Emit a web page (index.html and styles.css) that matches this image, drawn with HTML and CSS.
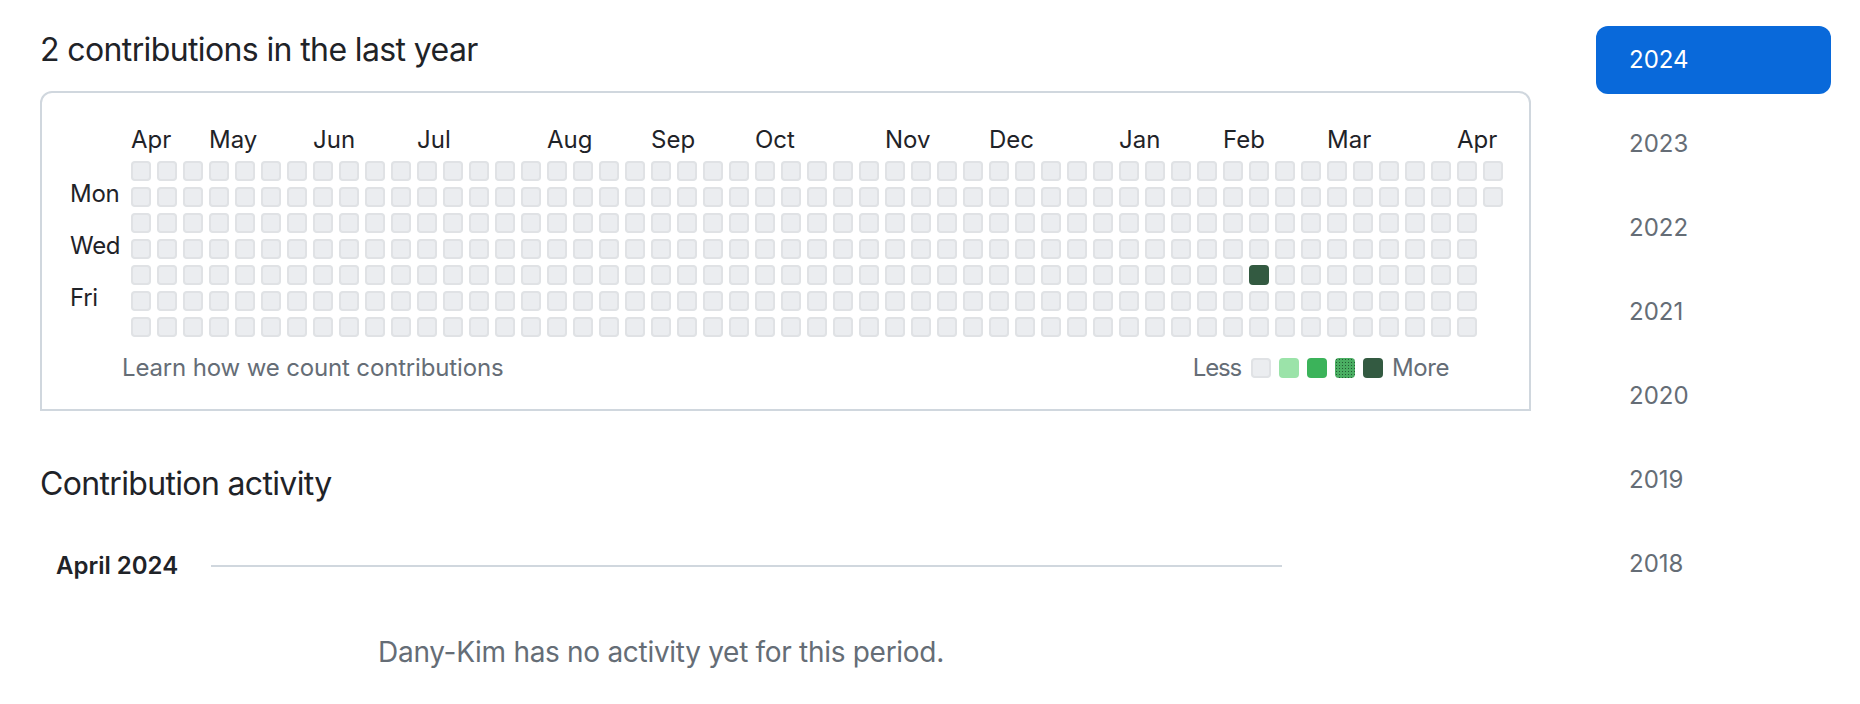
FILE: index.html
```html
<!DOCTYPE html>
<html lang="en">
<head>
<meta charset="utf-8">
<title>Contributions</title>
<link rel="stylesheet" href="styles.css">
</head>
<body>
<div class="page">
  <main class="main">
    <h2 class="graph-title">2 contributions in the last year</h2>
    <div class="graph-box">
      <div class="calendar">
        <div class="months">
          <span style="grid-column: 1">Apr</span>
          <span style="grid-column: 4">May</span>
          <span style="grid-column: 8">Jun</span>
          <span style="grid-column: 12">Jul</span>
          <span style="grid-column: 17">Aug</span>
          <span style="grid-column: 21">Sep</span>
          <span style="grid-column: 25">Oct</span>
          <span style="grid-column: 30">Nov</span>
          <span style="grid-column: 34">Dec</span>
          <span style="grid-column: 39">Jan</span>
          <span style="grid-column: 43">Feb</span>
          <span style="grid-column: 47">Mar</span>
          <span style="grid-column: 52">Apr</span>
        </div>
        <div class="days">
          <span class="mon">Mon</span>
          <span class="wed">Wed</span>
          <span class="fri">Fri</span>
        </div>
        <div class="cells">
<i></i><i></i><i></i><i></i><i></i><i></i><i></i>
<i></i><i></i><i></i><i></i><i></i><i></i><i></i>
<i></i><i></i><i></i><i></i><i></i><i></i><i></i>
<i></i><i></i><i></i><i></i><i></i><i></i><i></i>
<i></i><i></i><i></i><i></i><i></i><i></i><i></i>
<i></i><i></i><i></i><i></i><i></i><i></i><i></i>
<i></i><i></i><i></i><i></i><i></i><i></i><i></i>
<i></i><i></i><i></i><i></i><i></i><i></i><i></i>
<i></i><i></i><i></i><i></i><i></i><i></i><i></i>
<i></i><i></i><i></i><i></i><i></i><i></i><i></i>
<i></i><i></i><i></i><i></i><i></i><i></i><i></i>
<i></i><i></i><i></i><i></i><i></i><i></i><i></i>
<i></i><i></i><i></i><i></i><i></i><i></i><i></i>
<i></i><i></i><i></i><i></i><i></i><i></i><i></i>
<i></i><i></i><i></i><i></i><i></i><i></i><i></i>
<i></i><i></i><i></i><i></i><i></i><i></i><i></i>
<i></i><i></i><i></i><i></i><i></i><i></i><i></i>
<i></i><i></i><i></i><i></i><i></i><i></i><i></i>
<i></i><i></i><i></i><i></i><i></i><i></i><i></i>
<i></i><i></i><i></i><i></i><i></i><i></i><i></i>
<i></i><i></i><i></i><i></i><i></i><i></i><i></i>
<i></i><i></i><i></i><i></i><i></i><i></i><i></i>
<i></i><i></i><i></i><i></i><i></i><i></i><i></i>
<i></i><i></i><i></i><i></i><i></i><i></i><i></i>
<i></i><i></i><i></i><i></i><i></i><i></i><i></i>
<i></i><i></i><i></i><i></i><i></i><i></i><i></i>
<i></i><i></i><i></i><i></i><i></i><i></i><i></i>
<i></i><i></i><i></i><i></i><i></i><i></i><i></i>
<i></i><i></i><i></i><i></i><i></i><i></i><i></i>
<i></i><i></i><i></i><i></i><i></i><i></i><i></i>
<i></i><i></i><i></i><i></i><i></i><i></i><i></i>
<i></i><i></i><i></i><i></i><i></i><i></i><i></i>
<i></i><i></i><i></i><i></i><i></i><i></i><i></i>
<i></i><i></i><i></i><i></i><i></i><i></i><i></i>
<i></i><i></i><i></i><i></i><i></i><i></i><i></i>
<i></i><i></i><i></i><i></i><i></i><i></i><i></i>
<i></i><i></i><i></i><i></i><i></i><i></i><i></i>
<i></i><i></i><i></i><i></i><i></i><i></i><i></i>
<i></i><i></i><i></i><i></i><i></i><i></i><i></i>
<i></i><i></i><i></i><i></i><i></i><i></i><i></i>
<i></i><i></i><i></i><i></i><i></i><i></i><i></i>
<i></i><i></i><i></i><i></i><i></i><i></i><i></i>
<i></i><i></i><i></i><i></i><i></i><i></i><i></i>
<i></i><i></i><i></i><i></i><i class="l4"></i><i></i><i></i>
<i></i><i></i><i></i><i></i><i></i><i></i><i></i>
<i></i><i></i><i></i><i></i><i></i><i></i><i></i>
<i></i><i></i><i></i><i></i><i></i><i></i><i></i>
<i></i><i></i><i></i><i></i><i></i><i></i><i></i>
<i></i><i></i><i></i><i></i><i></i><i></i><i></i>
<i></i><i></i><i></i><i></i><i></i><i></i><i></i>
<i></i><i></i><i></i><i></i><i></i><i></i><i></i>
<i></i><i></i><i></i><i></i><i></i><i></i><i></i>
<i></i><i></i>
        </div>
      </div>
      <div class="graph-footer">
        <a class="learn" href="#">Learn how we count contributions</a>
        <div class="legend">
          <span class="less">Less</span>
          <i></i><i class="l1"></i><i class="l2"></i><i class="l3"></i><i class="l4"></i>
          <span class="more">More</span>
        </div>
      </div>
    </div>

    <h2 class="activity-title">Contribution activity</h2>
    <section class="activity">
      <div class="month-heading">
        <h3>April 2024</h3>
        <span class="rule"></span>
      </div>
      <p class="empty">Dany-Kim has no activity yet for this period.</p>
    </section>
  </main>

  <nav class="years">
    <a class="year selected" href="#">2024</a>
    <a class="year" href="#">2023</a>
    <a class="year" href="#">2022</a>
    <a class="year" href="#">2021</a>
    <a class="year" href="#">2020</a>
    <a class="year" href="#">2019</a>
    <a class="year" href="#">2018</a>
  </nav>
</div>
</body>
</html>
```

FILE: styles.css
```css
* { box-sizing: border-box; }
html, body { margin: 0; background: #ffffff; }
body {
  font-family: Inter, "Liberation Sans", sans-serif;
  color: #1f2328;
}
.page {
  display: flex;
  gap: 65px;
  padding: 0 29px 0 40px;
}
.main { flex: 1; min-width: 0; }

.graph-title {
  margin: 26px 0 0;
  font-size: 32px;
  font-weight: 400;
  line-height: 48px;
  letter-spacing: -0.62px;
}

.graph-box {
  margin-top: 17px;
  border: 2px solid #d0d7de;
  border-radius: 12px 12px 0 0;
  padding: 35px 16px 21px;
}

.calendar {
  display: grid;
  grid-template-columns: 55px max-content;
  grid-template-rows: 27px auto;
  gap: 6px;
  padding-left: 12px;
  font-size: 24px;
}
.months {
  grid-column: 2;
  grid-row: 1;
  display: grid;
  grid-template-columns: repeat(53, 20px);
  column-gap: 6px;
  line-height: 24px;
}
.months span { grid-row: 1; white-space: nowrap; align-self: start; }

.days {
  grid-column: 1;
  grid-row: 2;
  display: grid;
  grid-template-rows: repeat(7, 20px);
  row-gap: 6px;
  line-height: 14px;
  letter-spacing: -0.3px;
}
.days span { align-self: start; white-space: nowrap; }
.days .mon { grid-row: 2; }
.days .wed { grid-row: 4; }
.days .fri { grid-row: 6; }

.cells {
  grid-column: 2;
  grid-row: 2;
  display: grid;
  grid-template-rows: repeat(7, 20px);
  grid-auto-flow: column;
  grid-auto-columns: 20px;
  gap: 6px;
}
.cells i, .legend i {
  display: block;
  width: 20px;
  height: 20px;
  border-radius: 4px;
  background: #ebedf0;
  box-shadow: inset 0 0 0 2px rgba(27, 31, 35, 0.05);
}
.cells i.l4, .legend i.l4 { background: #335a41; box-shadow: none; }
.legend i.l1 { background: #9be3a9; box-shadow: none; }
.legend i.l2 { background: #3bb35a; box-shadow: none; }
.legend i.l3 {
  background-color: #4aae62;
  background-image: radial-gradient(circle, #245c34 35%, transparent 40%);
  background-size: 3px 3px;
  box-shadow: none;
}

.graph-footer {
  margin-top: 11px;
  height: 40px;
  display: flex;
  align-items: center;
  justify-content: space-between;
  padding: 0 64px;
  font-size: 24px;
  line-height: 40px;
  color: #656d76;
}
.learn { color: #656d76; text-decoration: none; letter-spacing: -0.15px; }
.legend { display: flex; align-items: center; gap: 8px; }
.legend span { letter-spacing: -0.4px; }
.legend .less { margin-right: 2px; letter-spacing: -1.2px; }
.legend .more { margin-left: 1px; }

.activity-title {
  margin: 49px 0 0;
  font-size: 32px;
  font-weight: 400;
  line-height: 48px;
  letter-spacing: -0.66px;
}
.activity { width: 1242px; }
.month-heading {
  margin-top: 38px;
  height: 40px;
  display: flex;
  align-items: center;
  padding-left: 16px;
}
.month-heading h3 {
  margin: 0;
  font-size: 24px;
  font-weight: 600;
  line-height: 40px;
  color: #1f2328;
}
.rule {
  flex: 1;
  height: 2px;
  background: #d0d7de;
  margin-left: 33px;
}
.empty {
  margin: 46px 0 0;
  text-align: center;
  font-size: 28px;
  line-height: 40px;
  letter-spacing: -0.3px;
  color: #656d76;
}

.years {
  width: 235px;
  flex: none;
  margin-top: 26px;
  display: flex;
  flex-direction: column;
  gap: 16px;
}
.year {
  display: block;
  height: 68px;
  line-height: 68px;
  padding-left: 33px;
  font-size: 24px;
  color: #656d76;
  text-decoration: none;
  border-radius: 12px;
}
.year.selected { background: #0969da; color: #ffffff; }
```
